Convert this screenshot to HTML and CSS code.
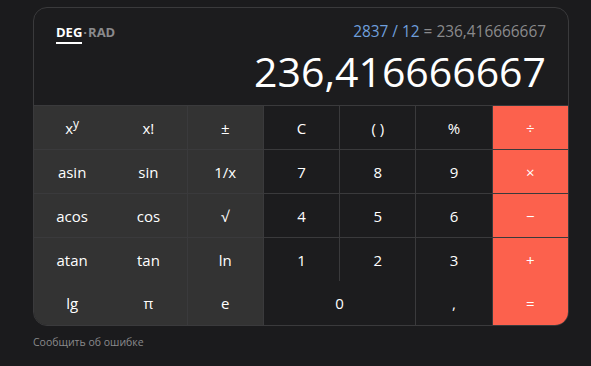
FILE: index.html
```html
<!DOCTYPE html>
<html lang="ru">
<head>
    <title>Калькулятор</title>
    <link rel="stylesheet" href="styles.css">
</head>
<body>
    <div class="calc">
        <div class="screen">
            <div class="topline">
                <div class="modes">
                    <span class="mode active">DEG</span><span class="sep">·</span><span class="mode">RAD</span>
                </div>
                <div class="expr"><span class="input">2837 / 12</span> = 236,416666667</div>
            </div>
            <div class="value">236,416666667</div>
        </div>
        <div class="keys">
            <button class="key fn">x<sup>y</sup></button>
            <button class="key fn">x!</button>
            <button class="key fn edge">±</button>
            <button class="key edge">C</button>
            <button class="key edge">( )</button>
            <button class="key edge">%</button>
            <button class="key op edge">÷</button>

            <button class="key fn">asin</button>
            <button class="key fn">sin</button>
            <button class="key fn edge">1/x</button>
            <button class="key edge">7</button>
            <button class="key edge">8</button>
            <button class="key edge">9</button>
            <button class="key op edge">×</button>

            <button class="key fn">acos</button>
            <button class="key fn">cos</button>
            <button class="key fn edge">√</button>
            <button class="key edge">4</button>
            <button class="key edge">5</button>
            <button class="key edge">6</button>
            <button class="key op edge">−</button>

            <button class="key fn">atan</button>
            <button class="key fn">tan</button>
            <button class="key fn edge">ln</button>
            <button class="key edge">1</button>
            <button class="key edge">2</button>
            <button class="key edge">3</button>
            <button class="key op edge">+</button>

            <button class="key fn last">lg</button>
            <button class="key fn last">π</button>
            <button class="key fn edge last">e</button>
            <button class="key edge last zero">0</button>
            <button class="key edge last">,</button>
            <button class="key op edge last">=</button>
        </div>
    </div>
    <a class="report" href="#">Сообщить об ошибке</a>
</body>
</html>
```

FILE: styles.css
```css
body{
    margin: 0;
    padding: 7px 0 0 33px;
    background-color: #1b1b1d;
    font-family: 'Open Sans', 'Noto Sans', sans-serif;
}

.calc{
    width: 534px;
    border: 1px solid #3a3a3c;
    border-radius: 14px;
    overflow: hidden;
    background-color: #1c1c1e;
}

.screen{
    height: 97px;
    padding: 13px 22px 0 22px;
    box-sizing: border-box;
}

.topline{
    display: flex;
    justify-content: space-between;
    align-items: baseline;
}

.modes{
    font-size: 13px;
    font-weight: 700;
    color: #8a8a8c;
}

.mode.active{
    color: #ffffff;
    border-bottom: 2px solid #ffffff;
    padding-bottom: 1px;
}

.sep{
    margin: 0 1px;
}

.expr{
    font-size: 15.4px;
    color: #8a8a8c;
}

.expr .input{
    color: #6f9fdc;
}

.value{
    margin-top: 5px;
    text-align: right;
    font-size: 41px;
    line-height: 48px;
    color: #ffffff;
}

.keys{
    display: grid;
    grid-template-columns: repeat(7, 1fr);
    grid-auto-rows: 44px;
}

.key{
    border: none;
    border-top: 1px solid #3a3a3c;
    background-color: #1c1c1e;
    color: #ffffff;
    font-family: inherit;
    font-size: 15px;
    font-weight: 500;
    padding: 0;
    margin: 0;
}

.key.fn{
    background-color: #333333;
}

.key.op{
    background-color: #fc614d;
}

.key.edge{
    border-left: 1px solid #3a3a3c;
}

.key.last{
    border-top: none;
}

.key.zero{
    grid-column: span 2;
}

.key sup{
    font-size: 12px;
    line-height: 0;
}

.report{
    display: block;
    margin-top: 9px;
    font-size: 10.5px;
    color: #8a8a8c;
    text-decoration: none;
}
```
